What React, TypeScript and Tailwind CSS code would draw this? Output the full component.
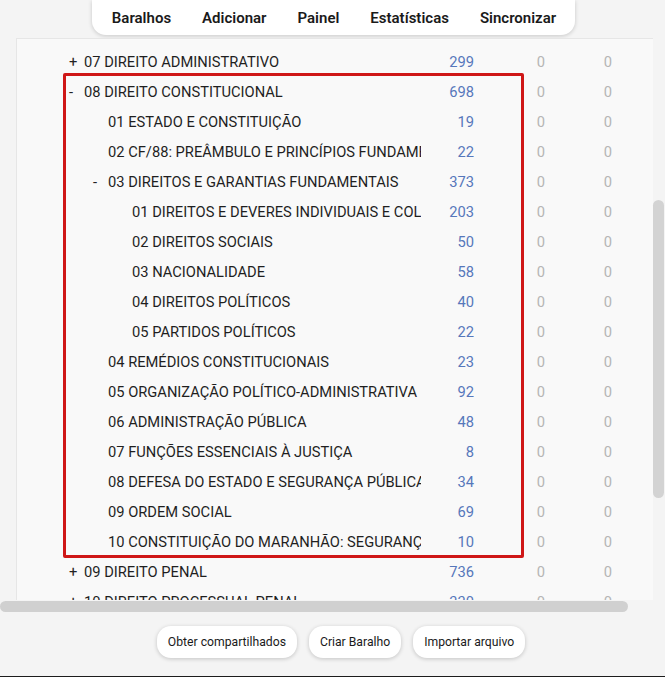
import React from "react"

type Deck = {
  name: string
  due: number
  level: number
  sign?: "+" | "-"
}

const before: Deck[] = [{ name: "07 DIREITO ADMINISTRATIVO", due: 299, level: 0, sign: "+" }]

const constitutional: Deck[] = [
  { name: "08 DIREITO CONSTITUCIONAL", due: 698, level: 0, sign: "-" },
  { name: "01 ESTADO E CONSTITUIÇÃO", due: 19, level: 1 },
  { name: "02 CF/88: PREÂMBULO E PRINCÍPIOS FUNDAMENTAIS", due: 22, level: 1 },
  { name: "03 DIREITOS E GARANTIAS FUNDAMENTAIS", due: 373, level: 1, sign: "-" },
  { name: "01 DIREITOS E DEVERES INDIVIDUAIS E COLETIVOS", due: 203, level: 2 },
  { name: "02 DIREITOS SOCIAIS", due: 50, level: 2 },
  { name: "03 NACIONALIDADE", due: 58, level: 2 },
  { name: "04 DIREITOS POLÍTICOS", due: 40, level: 2 },
  { name: "05 PARTIDOS POLÍTICOS", due: 22, level: 2 },
  { name: "04 REMÉDIOS CONSTITUCIONAIS", due: 23, level: 1 },
  { name: "05 ORGANIZAÇÃO POLÍTICO-ADMINISTRATIVA", due: 92, level: 1 },
  { name: "06 ADMINISTRAÇÃO PÚBLICA", due: 48, level: 1 },
  { name: "07 FUNÇÕES ESSENCIAIS À JUSTIÇA", due: 8, level: 1 },
  { name: "08 DEFESA DO ESTADO E SEGURANÇA PÚBLICA", due: 34, level: 1 },
  { name: "09 ORDEM SOCIAL", due: 69, level: 1 },
  { name: "10 CONSTITUIÇÃO DO MARANHÃO: SEGURANÇA PÚBLICA", due: 10, level: 1 },
]

const after: Deck[] = [
  { name: "09 DIREITO PENAL", due: 736, level: 0, sign: "+" },
  { name: "10 DIREITO PROCESSUAL PENAL", due: 330, level: 0, sign: "+" },
]

const indent = ["pl-[52px]", "pl-[76px]", "pl-[100px]"]

function DeckRow({ deck }: { deck: Deck }) {
  return (
    <div className="flex h-[30px] items-center text-[14.7px] whitespace-nowrap">
      <div className={`flex w-[404px] shrink-0 overflow-hidden ${indent[deck.level]}`}>
        <span className="w-[15px] shrink-0 text-[#222]">{deck.sign ?? ""}</span>
        <span className="text-[#1f1f1f]">{deck.name}</span>
      </div>
      <div className="w-[53px] shrink-0 text-right text-[#5677bb]">{deck.due}</div>
      <div className="w-[71px] shrink-0 text-right text-[#b5b5b5]">0</div>
      <div className="w-[67px] shrink-0 text-right text-[#b5b5b5]">0</div>
    </div>
  )
}

export default function App() {
  const tabs = ["Baralhos", "Adicionar", "Painel", "Estatísticas", "Sincronizar"]

  return (
    <div className="flex h-[677px] w-[665px] flex-col overflow-hidden bg-[#f4f4f4] font-['Roboto',sans-serif]">
      <div className="flex h-[612px] shrink-0">
        <div className="flex w-[653px] flex-col">
          {/* top toolbar */}
          <div className="flex h-[38px] shrink-0 justify-center pl-[14px]">
            <nav className="flex h-[35px] items-center gap-[31px] rounded-b-[14px] bg-white pt-[1px] pr-[19px] pl-[20px] text-[15px] font-semibold text-[#1a1a1a] shadow-[0_1px_4px_rgba(0,0,0,0.18)]">
              {tabs.map((t) => (
                <span key={t}>{t}</span>
              ))}
            </nav>
          </div>

          {/* deck list */}
          <div className="ml-[16px] h-[562px] overflow-hidden border-t border-l border-[#e6e6e6] bg-[#f9f9f9] pt-[8px]">
            {before.map((d) => (
              <DeckRow key={d.name} deck={d} />
            ))}
            <div className="relative">
              {constitutional.map((d) => (
                <DeckRow key={d.name} deck={d} />
              ))}
              <div className="pointer-events-none absolute top-[-4px] bottom-[-1px] left-[46px] w-[461px] rounded-[2px] border-[3px] border-[#cf1717]" />
            </div>
            {after.map((d) => (
              <DeckRow key={d.name} deck={d} />
            ))}
          </div>

          {/* horizontal scrollbar */}
          <div className="flex h-[12px] shrink-0 items-center">
            <div className="h-[11px] w-[628px] rounded-full bg-[#d0d0d0]" />
          </div>
        </div>

        {/* vertical scrollbar */}
        <div className="w-[12px] shrink-0">
          <div className="mt-[200px] h-[298px] w-[11px] rounded-full bg-[#d3d3d3]" />
        </div>
      </div>

      <div className="flex flex-1 items-center justify-center gap-[12px] pb-[4px] pl-[17px] text-[12.2px] text-[#1a1a1a]">
        {["Obter compartilhados", "Criar Baralho", "Importar arquivo"].map((b) => (
          <button
            key={b}
            type="button"
            className="h-[32px] rounded-[14px] bg-white px-[11px] shadow-[0_1px_4px_rgba(0,0,0,0.2)]"
          >
            {b}
          </button>
        ))}
      </div>
      <div className="h-px shrink-0 bg-[#1c1c1c]" />
    </div>
  )
}
